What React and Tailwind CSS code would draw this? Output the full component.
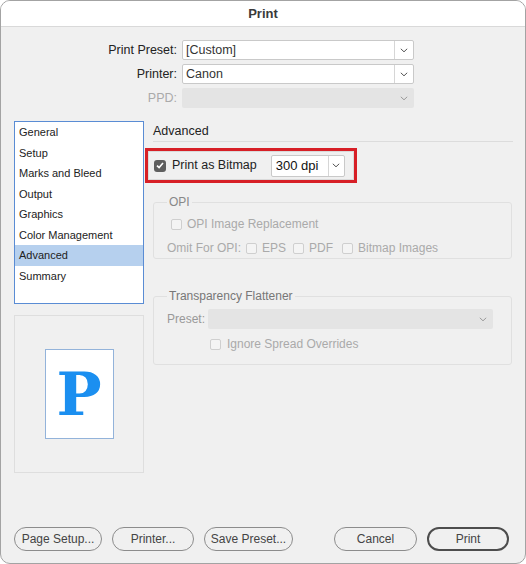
const font = { fontFamily: '"Liberation Sans", Arial, sans-serif' };

const Chevron = ({ className = "text-[#555]" }) => (
  <svg width="8" height="5" viewBox="0 0 8 5" className={className}>
    <path d="M0.8 0.8 L4 3.8 L7.2 0.8" fill="none" stroke="currentColor" strokeWidth="1" />
  </svg>
);

const Select = ({ value, disabled }) =>
  disabled ? (
    <div className="flex h-[20px] w-[232px] items-center justify-end rounded-[2px] bg-[#e4e4e4] pr-[6px]">
      <Chevron className="text-[#9a9a9a]" />
    </div>
  ) : (
    <div className="flex h-[20px] w-[232px] items-stretch rounded-[2px] border border-[#c9c9c9] bg-white">
      <div className="flex flex-1 items-center pl-[3px] text-[12.5px] text-[#333]">{value}</div>
      <div className="flex w-[19px] items-center justify-center border-l border-[#d6d6d6]">
        <Chevron />
      </div>
    </div>
  );

const Check = ({ checked }) =>
  checked ? (
    <div className="flex h-[12px] w-[12px] items-center justify-center rounded-[3px] bg-[#5f5f5f]">
      <svg width="8" height="7" viewBox="0 0 8 7">
        <path d="M1 3.6 L3.1 5.6 L7 1" fill="none" stroke="white" strokeWidth="1.6" />
      </svg>
    </div>
  ) : (
    <div className="h-[11px] w-[11px] rounded-[2px] border border-[#cfcfcf] bg-[#f4f4f4]" />
  );

const items = [
  "General",
  "Setup",
  "Marks and Bleed",
  "Output",
  "Graphics",
  "Color Management",
  "Advanced",
  "Summary",
];

const Button = ({ children, w, primary }) => (
  <div
    className={`flex h-[24px] items-center justify-center rounded-full text-[12px] text-[#444] ${
      primary ? "border-2 border-[#4d4d4d]" : "border border-[#8c8c8c]"
    } ${w}`}
  >
    {children}
  </div>
);

export default function App() {
  return (
    <div style={font} className="h-[564px] w-[526px] bg-white">
      <div className="flex h-[564px] w-[526px] flex-col overflow-hidden rounded-[10px] border border-[#a3a3a3] bg-[#f0f0f0]">
        {/* title */}
        <div className="flex h-[26px] shrink-0 items-center justify-center border-b border-[#d9d9d9] bg-white text-[13px] font-bold text-[#3a3a3a]">
          Print
        </div>

        {/* top form */}
        <div className="mt-[13px] grid grid-cols-[176px_232px] gap-x-[5px] gap-y-[4px]">
          <div className="flex items-center justify-end text-[12.5px] text-[#222]">Print Preset:</div>
          <Select value="[Custom]" />
          <div className="flex items-center justify-end text-[12.5px] text-[#222]">Printer:</div>
          <Select value="Canon" />
          <div className="flex items-center justify-end text-[12.5px] text-[#aaa]">PPD:</div>
          <Select disabled />
        </div>

        {/* main */}
        <div className="mt-[13px] flex gap-[9px] pl-[13px] pr-[12px]">
          <div className="flex w-[130px] shrink-0 flex-col gap-[11px]">
            <div className="h-[183px] border border-[#5a8cd4] bg-white">
              {items.map((it) => (
                <div
                  key={it}
                  className={`flex h-[20.5px] items-center pl-[4px] text-[11px] text-[#222] ${
                    it === "Advanced" ? "bg-[#b6d0ee]" : ""
                  }`}
                >
                  {it}
                </div>
              ))}
            </div>
            <div className="flex h-[158px] items-center justify-center border border-[#dedede] bg-[#f0f0f0]">
              <div className="flex h-[90px] w-[69px] items-center justify-center border border-[#93b3da] bg-white">
                <span
                  className="text-[60px] font-bold leading-none text-[#1b8ff0]"
                  style={{ fontFamily: '"DejaVu Serif", "Liberation Serif", serif' }}
                >
                  P
                </span>
              </div>
            </div>
          </div>

          <div className="flex w-[360px] flex-col">
            <div className="flex h-[21px] items-center border-b border-[#dcdcdc] text-[12.5px] text-[#222]">
              Advanced
            </div>

            <div className="-ml-[8px] mt-[6px] h-[35px] w-[212px] border-[3px] border-[#d71f26]">
              <div className="flex h-full items-center border border-[#dadada] pl-[5px]">
                <Check checked />
                <span className="ml-[6px] text-[12.5px] text-[#222]">Print as Bitmap</span>
                <div className="ml-[14px] flex h-[22px] w-[74px] items-stretch rounded-[2px] border border-[#c9c9c9] bg-white">
                  <div className="flex flex-1 items-center pl-[4px] text-[13px] text-[#111]">300 dpi</div>
                  <div className="flex w-[16px] items-center justify-center border-l border-[#d6d6d6]">
                    <Chevron />
                  </div>
                </div>
              </div>
            </div>

            <fieldset className="mt-[10px] h-[66px] w-[359px] rounded-[3px] border border-[#e0e0e0] pl-[13px]">
              <legend className="px-[2px] text-[12px] text-[#888]">OPI</legend>
              <div className="mt-[5px] flex h-[16px] items-center pl-[4px] text-[12px] text-[#aaa]">
                <Check />
                <span className="ml-[5px]">OPI Image Replacement</span>
              </div>
              <div className="mt-[8px] flex h-[16px] items-center text-[12px] text-[#aaa]">
                <span>Omit For OPI:</span>
                <span className="ml-[5px]"><Check /></span>
                <span className="ml-[5px]">EPS</span>
                <span className="ml-[7px]"><Check /></span>
                <span className="ml-[5px]">PDF</span>
                <span className="ml-[9px]"><Check /></span>
                <span className="ml-[5px]">Bitmap Images</span>
              </div>
            </fieldset>

            <fieldset className="mt-[28px] h-[78px] w-[359px] rounded-[3px] border border-[#e0e0e0] pl-[13px]">
              <legend className="px-[2px] text-[12px] text-[#777]">Transparency Flattener</legend>
              <div className="mt-[4px] flex items-center text-[12px] text-[#999]">
                <span className="w-[41px]">Preset:</span>
                <div className="flex h-[20px] w-[285px] items-center justify-end rounded-[2px] bg-[#e4e4e4] pr-[6px]">
                  <Chevron className="text-[#9a9a9a]" />
                </div>
              </div>
              <div className="mt-[7px] flex h-[16px] items-center pl-[43px] text-[12px] text-[#aaa]">
                <Check />
                <span className="ml-[6px]">Ignore Spread Overrides</span>
              </div>
            </fieldset>
          </div>
        </div>

        {/* buttons */}
        <div className="mb-[12px] mt-auto flex items-center pl-[13px] pr-[16px]">
          <Button w="w-[88px]">Page Setup...</Button>
          <div className="ml-[10px]">
            <Button w="w-[82px]">Printer...</Button>
          </div>
          <div className="ml-[10px]">
            <Button w="w-[89px]">Save Preset...</Button>
          </div>
          <div className="ml-auto">
            <Button w="w-[83px]">Cancel</Button>
          </div>
          <div className="ml-[10px]">
            <Button w="w-[82px]" primary>Print</Button>
          </div>
        </div>
      </div>
    </div>
  );
}
